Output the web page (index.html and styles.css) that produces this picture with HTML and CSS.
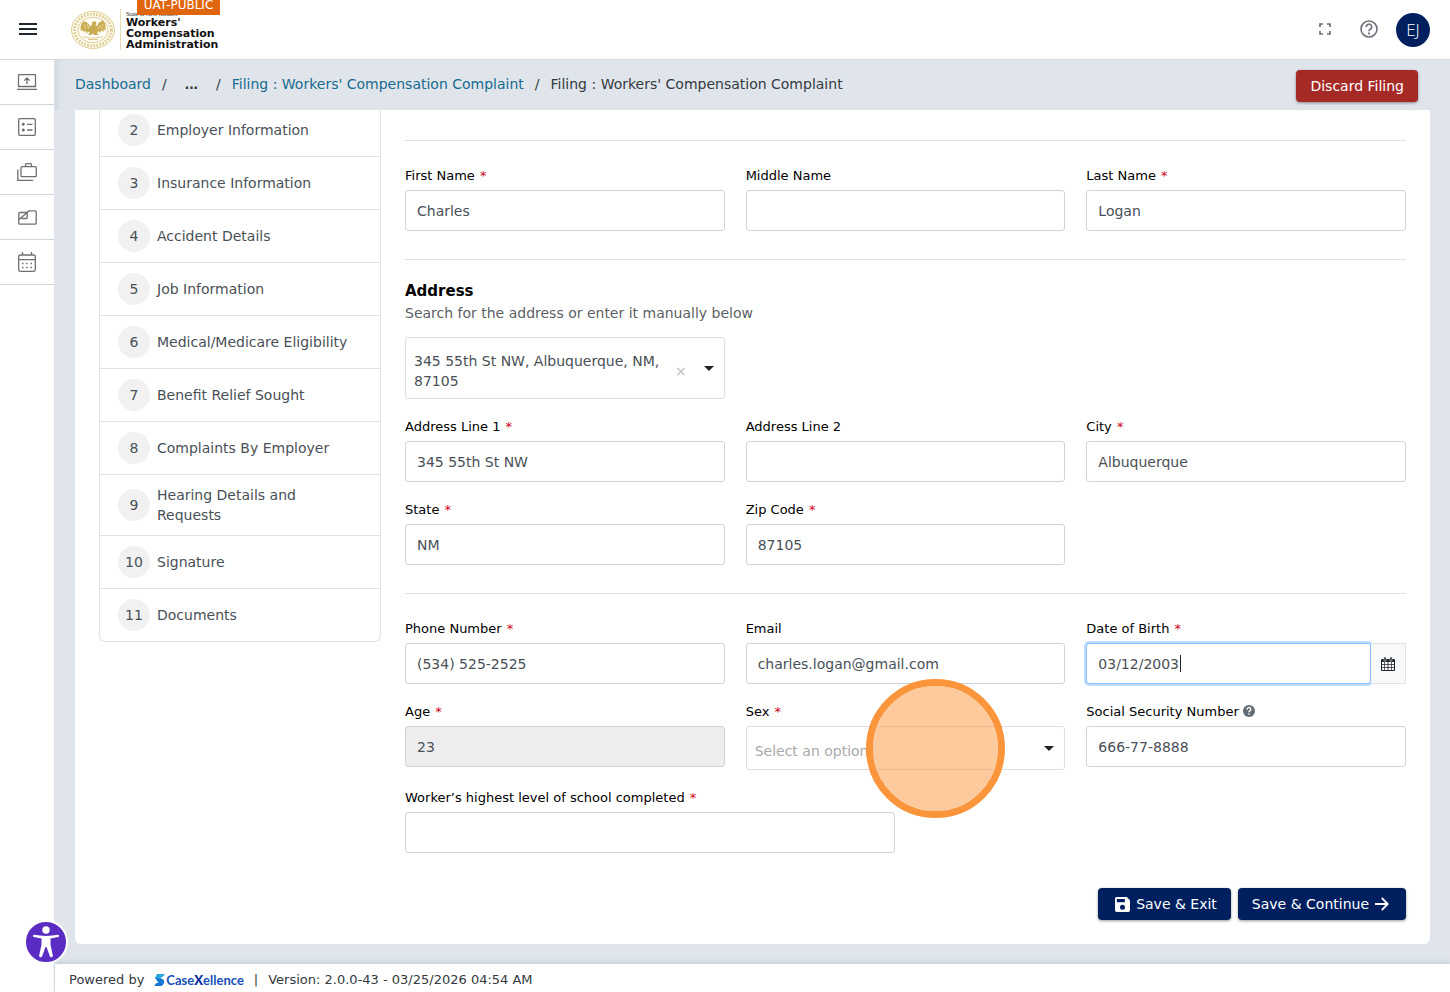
FILE: index.html
```html
<!DOCTYPE html>
<html lang="en">
<head>
  <meta charset="UTF-8">
  <meta name="viewport" content="width=device-width, initial-scale=1.0">
  <title>Filing : Workers' Compensation Complaint</title>
  <link rel="stylesheet" href="styles.css">
</head>
<body>
  <header class="topbar">
    <button class="icon-btn menu-btn" type="button" aria-label="Menu">
      <svg width="20" height="14" viewBox="0 0 20 14" fill="none" stroke="#20262e" stroke-width="2"><path d="M1 2h18M1 7h18M1 12h18"/></svg>
    </button>
    <a class="brand" href="#">
      <svg class="seal" width="46" height="40" viewBox="0 0 46 40" fill="none">
        <ellipse cx="23" cy="20" rx="21.5" ry="18.500" fill="#fdfaf0" stroke="#e0cf92"/>
        <ellipse cx="23" cy="20" rx="18.500" ry="15.800" stroke="#dccb8c" stroke-width="3" stroke-dasharray="1.600 1.500"/>
        <ellipse cx="23" cy="20" rx="15" ry="12.700" fill="#fffdf7" stroke="#e0cf92"/>
        <path d="M22 13c1-2.500 4-2 4.500 0l-1 2 1.500 1c1-3 3-5 6-5 2 1 3 4 2.500 10l-1.500-2-.8 3-1.700-2-1 3-2-2-1.500 2 2 2h-5l-1-1.500-2 1.500h-3l2-2.500-2-1-1.500 2-1.200-3-1.800 2-.5-3-2 2c-1-5 0-9 3-10 3 0 5 2 6 5l1.500-1z" fill="#c9ab52"/>
        <path d="M14 14l2 5M17 13.500l2 5.500M33 14l-2 5M30 15l-2 4" stroke="#efe0ab" stroke-width=".8"/>
        <path d="M13 26.500c6 2 14 2 20 0M18 29.500h10" stroke="#dcc98a"/>
      </svg>
      <span class="brand-text">
        <span class="brand-state">State of New Mexico</span>
        <span class="brand-name">Workers'<br>Compensation<br>Administration</span>
      </span>
      <span class="env-tag">UAT-PUBLIC</span>
    </a>
    <div class="topbar-actions">
      <button class="icon-btn" type="button" aria-label="Full screen">
        <svg width="12" height="12" viewBox="0 0 12 12" fill="none" stroke="#6b7079" stroke-width="1.700"><path d="M1 4V1h3M8 1h3v3M11 8v3H8M4 11H1V8"/></svg>
      </button>
      <button class="icon-btn" type="button" aria-label="Help">
        <svg width="18" height="18" viewBox="0 0 18 18" fill="none" stroke="#6b7079" stroke-width="1.600"><circle cx="9" cy="9" r="8"/><path d="M6.300 7.100A2.700 2.700 0 1 1 9.900 9.400C9.200 9.800 9 10.200 9 11.200"/><path d="M9 12.600v1.800" stroke-width="1.800"/></svg>
      </button>
      <button class="avatar" type="button">EJ</button>
    </div>
  </header>

  <div class="shell">
    <nav class="rail" aria-label="Main">
      <a href="#" aria-label="Submit"><svg width="20" height="16" viewBox="0 0 20 16"><path d="M1.500 12.500v-11a1 1 0 0 1 1-1h15a1 1 0 0 1 1 1v11zM0 15.300h20M10 10V4M7.300 6.600 10 4l2.700 2.600"/></svg></a>
      <a href="#" aria-label="Tasks"><svg width="18" height="18" viewBox="0 0 18 18"><rect x=".7" y=".7" width="16.600" height="16.600" rx="1"/><path d="M9 6.300h5.500M9 12h5.500"/><path d="M3.800 6.300h3M5.300 4.800v3M3.800 12h3M5.300 10.500v3" stroke-width="1.600"/></svg></a>
      <a href="#" aria-label="Cases"><svg width="20" height="18" viewBox="0 0 20 18"><rect x="4" y="3.700" width="15.300" height="10" rx="1"/><path d="M8.500 3.500V1.700a1 1 0 0 1 1-1h4a1 1 0 0 1 1 1v1.800M.8 6.500v10.800H16"/></svg></a>
      <a href="#" aria-label="Documents"><svg width="19" height="15" viewBox="0 0 19 15"><path d="M9.200 2.500 10.500.8h6.700a1 1 0 0 1 1 1v11.400a1 1 0 0 1-1 1H1.800a1 1 0 0 1-1-1V3.500a1 1 0 0 1 1-1h7.400v5a1 1 0 0 1-1 1H3.500M1 9.500l8.200-7"/></svg></a>
      <a href="#" aria-label="Calendar"><svg width="18" height="20" viewBox="0 0 18 20"><rect x=".7" y="3" width="16.600" height="16.300" rx="1.500"/><path d="M.7 7.700h16.600M4.500 0v3M13.500 0v3"/><path d="M4 11.500h1.500M8.200 11.500h1.500M12.500 11.500H14M4 15.500h1.500M8.200 15.500h1.500M12.500 15.500H14" stroke-width="1.500"/></svg></a>
    </nav>

    <div class="page">
      <div class="crumb-bar">
        <nav class="breadcrumb" aria-label="Breadcrumb">
          <a href="#">Dashboard</a><span class="sep">/</span><button type="button" class="more">...</button><span class="sep">/</span><a href="#">Filing : Workers' Compensation Complaint</a><span class="sep">/</span><span>Filing : Workers' Compensation Complaint</span>
        </nav>
        <button class="btn btn-danger" type="button">Discard Filing</button>
      </div>

      <main class="card">
        <ol class="steps">
          <li><a href="#"><span class="num">2</span>Employer Information</a></li>
          <li><a href="#"><span class="num">3</span>Insurance Information</a></li>
          <li><a href="#"><span class="num">4</span>Accident Details</a></li>
          <li><a href="#"><span class="num">5</span>Job Information</a></li>
          <li><a href="#"><span class="num">6</span>Medical/Medicare Eligibility</a></li>
          <li><a href="#"><span class="num">7</span>Benefit Relief Sought</a></li>
          <li><a href="#"><span class="num">8</span>Complaints By Employer</a></li>
          <li><a href="#"><span class="num">9</span>Hearing Details and Requests</a></li>
          <li><a href="#"><span class="num">10</span>Signature</a></li>
          <li><a href="#"><span class="num">11</span>Documents</a></li>
        </ol>

        <form class="form">
          <hr>
          <div class="grid">
            <div class="field">
              <label for="first">First Name <span class="req">*</span></label>
              <input type="text" id="first" value="Charles">
            </div>
            <div class="field">
              <label for="middle">Middle Name</label>
              <input type="text" id="middle">
            </div>
            <div class="field">
              <label for="last">Last Name <span class="req">*</span></label>
              <input type="text" id="last" value="Logan">
            </div>
          </div>
          <hr>
          <h2>Address</h2>
          <p class="hint" id="address-hint">Search for the address or enter it manually below</p>
          <div class="grid">
            <div class="field picker">
              <select class="address-select" aria-labelledby="address-hint">
                <option>345 55th St NW, Albuquerque, NM, 87105</option>
              </select>
              <button class="clear" type="button" aria-label="Clear address">×</button>
            </div>
            <div class="field row-start">
              <label for="line1">Address Line 1 <span class="req">*</span></label>
              <input type="text" id="line1" value="345 55th St NW">
            </div>
            <div class="field">
              <label for="line2">Address Line 2</label>
              <input type="text" id="line2">
            </div>
            <div class="field">
              <label for="city">City <span class="req">*</span></label>
              <input type="text" id="city" value="Albuquerque">
            </div>
            <div class="field">
              <label for="state">State <span class="req">*</span></label>
              <input type="text" id="state" value="NM">
            </div>
            <div class="field">
              <label for="zip">Zip Code <span class="req">*</span></label>
              <input type="text" id="zip" value="87105">
            </div>
          </div>
          <hr>
          <div class="grid">
            <div class="field">
              <label for="phone">Phone Number <span class="req">*</span></label>
              <input type="text" id="phone" value="(534) 525-2525">
            </div>
            <div class="field">
              <label for="email">Email</label>
              <input type="email" id="email" value="charles.logan@gmail.com">
            </div>
            <div class="field">
              <label for="dob">Date of Birth <span class="req">*</span></label>
              <div class="input-group">
                <input type="text" id="dob" value="03/12/2003">
                <span class="caret"></span>
                <button type="button" class="addon" aria-label="Pick a date">
                  <svg width="14" height="14" viewBox="0 0 14 14"><path d="M1 2h12a1 1 0 0 1 1 1v10a1 1 0 0 1-1 1H1a1 1 0 0 1-1-1V3a1 1 0 0 1 1-1z" fill="#212529"/><path d="M3 0h2v4H3zM9 0h2v4H9z" fill="#212529" stroke="#f8f9fa" stroke-width=".5"/><path d="M1 5h2.300v2H1zM4 5h2.600v2H4zM7.400 5H10v2H7.400zM10.700 5H13v2h-2.300zM1 7.800h2.300v2.200H1zM4 7.800h2.600v2.200H4zM7.400 7.800H10v2.200H7.400zM10.700 7.800H13v2.200h-2.300zM1 10.800h2.300V13H1zM4 10.800h2.600V13H4zM7.400 10.800H10V13H7.400zM10.700 10.800H13V13h-2.300z" fill="#f8f9fa"/></svg>
                </button>
              </div>
            </div>
            <div class="field">
              <label for="age">Age <span class="req">*</span></label>
              <input type="text" id="age" value="23" disabled>
            </div>
            <div class="field">
              <label for="sex">Sex <span class="req">*</span></label>
              <select id="sex" class="placeholder">
                <option>Select an option</option>
              </select>
              <span class="pulse"></span>
            </div>
            <div class="field">
              <label for="ssn">Social Security Number
                <svg class="tip" width="12" height="12" viewBox="0 0 12 12"><circle cx="6" cy="6" r="6" fill="#636b74"/><path d="M4.200 4.700A1.800 1.800 0 1 1 6.700 6C6.100 6.300 6 6.500 6 7.200M6 8.200v1.500" fill="none" stroke="#fff" stroke-width="1.400"/></svg>
              </label>
              <input type="text" id="ssn" value="666-77-8888">
            </div>
          </div>
          <div class="grid grid-half">
            <div class="field">
              <label for="school">Worker’s highest level of school completed <span class="req">*</span></label>
              <input type="text" id="school">
            </div>
          </div>
          <div class="form-actions">
            <button class="btn btn-primary icon-left" type="button">
              <svg width="15" height="15" viewBox="0 0 16 16"><path fill="#fff" fill-rule="evenodd" d="M1.800 0h10.700L16 3.500v10.700a1.800 1.800 0 0 1-1.800 1.800H1.800A1.800 1.800 0 0 1 0 14.200V1.800A1.800 1.800 0 0 1 1.800 0zM2 2v3.500h8.500V2zM8 8.300a2.700 2.700 0 1 0 0 5.400 2.700 2.700 0 0 0 0-5.400z"/></svg>
              Save &amp; Exit
            </button>
            <button class="btn btn-primary icon-right" type="button">
              Save &amp; Continue
              <svg width="14" height="14" viewBox="0 0 14 14" fill="none" stroke="#fff" stroke-width="1.800"><path d="M0 7h12.500M6.800 1l6 6-6 6"/></svg>
            </button>
          </div>
        </form>
      </main>

      <footer class="footer">
        <span>Powered by</span>
        <a class="vendor" href="#">
          <svg width="12" height="14" viewBox="0 0 12 14"><path d="M3 1h8L8.500 4H6.500L10 8 5 7 1 5z" fill="#29a8e0"/><path d="M1 4.500l8.500 2.300c1.500 2 .5 4.700-2 6.200H0l2.500-3h2z" fill="#1976d2"/></svg>
          <span>Case<b>X</b>ellence</span>
        </a>
        <span class="bar">|</span>
        <span>Version: 2.0.0-43 - 03/25/2026 04:54 AM</span>
      </footer>
    </div>
  </div>

  <button class="a11y" type="button" aria-label="Accessibility options">
    <svg width="26" height="32" viewBox="0 0 26 32" fill="#fff"><circle cx="13" cy="4" r="3.700"/><path d="M1 8.800c8 1.500 16 1.500 24 0 1.300 0 1.400 1.800.2 2.100L17.500 12.500v6l2.300 11c.3 2-2.300 2.500-2.900.7L13.500 21h-1L9.100 30.200c-.6 1.800-3.200 1.300-2.900-.7l2.300-11v-6L.8 10.900C-.4 10.600-.3 8.800 1 8.800z"/></svg>
  </button>

  <script>
    const dob = document.getElementById("dob");
    dob.focus();
    dob.setSelectionRange(dob.value.length, dob.value.length);
  </script>
</body>
</html>
```
FILE: styles.css
```css
* {
  box-sizing: border-box;
}
body {
  margin: 0;
  min-height: 100vh;
  display: flex;
  flex-direction: column;
  font-family: 'DejaVu Sans', Verdana, sans-serif;
  font-size: 14px;
  line-height: 20px;
  color: #495057;
  background-color: #fff;
}
a {
  color: #176b8f;
  text-decoration: none;
}
button, input, select {
  font: inherit;
  color: inherit;
}
button {
  cursor: pointer;
}
.topbar {
  height: 60px;
  display: flex;
  align-items: center;
  border-bottom: 1px solid #d5dade;
}
.icon-btn {
  display: flex;
  padding: 0 0 1px;
  border: none;
  background: none;
}
.menu-btn {
  width: 55px;
  justify-content: center;
}
.brand {
  position: relative;
  display: flex;
  align-items: center;
  gap: 4px;
  margin-left: 15px;
  color: #111;
}
.brand-text {
  display: flex;
  flex-direction: column;
  padding: 2px 0 0 5px;
  border-left: 1px solid #e6dcb4;
}
.brand-state {
  font: 6px/6px 'Liberation Serif', serif;
}
.brand-name {
  font-size: 11px;
  line-height: 11px;
  font-weight: 700;
}
.env-tag {
  position: absolute;
  right: -2px;
  top: -14px;
  padding: 2px 7px;
  font-size: 12px;
  line-height: 16px;
  color: #fff;
  background-color: #df650e;
}
.topbar-actions {
  display: flex;
  align-items: center;
  gap: 29px;
  margin-left: auto;
  padding-right: 20px;
}
.avatar {
  width: 34px;
  height: 34px;
  margin-left: -11px;
  padding: 0;
  border: none;
  border-radius: 50%;
  font-family: 'Open Sans', sans-serif;
  font-size: 17px;
  font-weight: 300;
  color: #fff;
  background-color: #001f5f;
}
.shell {
  flex: 1;
  display: flex;
}
.rail {
  width: 55px;
  flex-shrink: 0;
  border-right: 1px solid #dde2e8;
}
.rail a {
  display: flex;
  align-items: center;
  justify-content: center;
  height: 45px;
  border-bottom: 1px solid #d0d6da;
}
.rail svg {
  fill: none;
  stroke: #6f6f6f;
  stroke-width: 1.3;
}
.page {
  flex: 1;
  min-width: 0;
  display: flex;
  flex-direction: column;
  background-color: #e0e5ec;
}
.crumb-bar {
  display: flex;
  justify-content: space-between;
  align-items: flex-start;
  height: 50px;
  padding: 10px 32px 0 20px;
  box-shadow: inset 5px 0 5px -3px #cdd5dd;
}
.breadcrumb {
  display: flex;
  align-items: center;
  padding-top: 4px;
  color: #343a40;
}
.sep {
  margin: 0 11px;
}
.more {
  padding: 0 7px;
  border: none;
  background: none;
  font-family: 'Liberation Sans', sans-serif;
  font-size: 16px;
  font-weight: 700;
}
.btn {
  display: flex;
  align-items: center;
  gap: 6px;
  height: 32px;
  padding: 0 14px;
  border: none;
  border-radius: 4px;
  color: #fff;
  box-shadow: 0 1px 3px rgba(0, 0, 0, 0.4);
}
.btn-danger {
  background-color: #a52a25;
}
.btn-primary {
  background-color: #001f5f;
}
.icon-left {
  padding-left: 17px;
}
.icon-right {
  padding-right: 17px;
}
.card {
  flex: 1;
  display: flex;
  align-items: flex-start;
  gap: 24px;
  margin: 0 20px 20px;
  padding: 0 24px 24px;
  border-radius: 0 0 6px 6px;
  background-color: #fff;
}
.steps {
  width: 282px;
  flex-shrink: 0;
  margin: 0;
  padding: 0;
  list-style: none;
  border: 1px solid #dee2e6;
  border-top: none;
  border-radius: 0 0 6px 6px;
}
.steps li + li {
  border-top: 1px solid #dee2e6;
}
.steps a {
  display: flex;
  align-items: center;
  gap: 7px;
  padding: 10px 24px 10px 18px;
  color: #495057;
}
.steps li:first-child a {
  padding-top: 4px;
}
.num {
  width: 32px;
  height: 32px;
  flex-shrink: 0;
  border-radius: 50%;
  line-height: 32px;
  text-align: center;
  background-color: #f1f1f1;
}
.form {
  flex: 1;
  min-width: 0;
  padding-top: 2px;
}
.form hr {
  margin: 28px 0 26px;
  border: none;
  border-top: 1px solid #dee2e6;
}
.form h2 {
  margin: -5px 0 2px;
  font-size: 15px;
  line-height: 20px;
  color: #000;
}
.hint {
  margin: 0 0 14px;
  color: #5b5f63;
}
.grid {
  display: grid;
  grid-template-columns: repeat(3, minmax(0, 1fr));
  gap: 19px 21px;
}
.grid-half {
  grid-template-columns: repeat(2, minmax(0, 1fr));
  margin-top: 19px;
}
.field {
  position: relative;
}
.row-start {
  grid-column-start: 1;
}
.field label {
  display: block;
  margin-bottom: 5px;
  font-size: 13px;
  line-height: 18px;
  color: #000;
}
.req {
  margin-left: 1px;
  color: #d0021b;
}
.tip {
  vertical-align: -1px;
}
.field input, .field select {
  display: block;
  width: 100%;
  height: 41px;
  padding: 0 11px;
  border: 1px solid #ced4da;
  border-radius: 3px;
  background-color: #fff;
}
.field input:disabled {
  background-color: #ededed;
}
.field select {
  appearance: none;
  height: 44px;
  padding: 6px 40px 0 8px;
  border-color: #dcdfe2;
  background: url("data:image/svg+xml,%3Csvg xmlns='http://www.w3.org/2000/svg' width='10' height='5'%3E%3Cpath d='M0 0h10L5 5z' fill='%23222'/%3E%3C/svg%3E") no-repeat right 10px center;
}
.field .placeholder {
  color: #a9a9a9;
}
.field .address-select {
  height: 62px;
  padding: 13px 60px 7px 8px;
  white-space: normal;
  line-height: 20px;
}
.clear {
  position: absolute;
  right: 38px;
  bottom: 18px;
  padding: 0;
  border: none;
  background: none;
  color: #bbb;
}
.input-group {
  position: relative;
  display: flex;
}
.field .input-group input {
  flex: 1;
  min-width: 0;
  caret-color: transparent;
}
.field .input-group input:focus {
  border-color: #80bdff;
  outline: none;
  box-shadow: 0 0 0 2px #bfdeff;
}
.caret {
  display: none;
  position: absolute;
  left: 94px;
  top: 12px;
  width: 1px;
  height: 17px;
  background-color: #212529;
}
.input-group input:focus + .caret {
  display: block;
}
.addon {
  display: flex;
  align-items: center;
  justify-content: center;
  width: 35px;
  padding: 0;
  border: 1px solid #dee2e6;
  border-left: none;
  background-color: #f8f9fa;
}
.pulse {
  position: absolute;
  left: 120px;
  top: -24px;
  width: 139px;
  height: 139px;
  border: 7px solid #fb953b;
  border-radius: 50%;
  background-color: rgba(251, 149, 59, 0.5);
  background-clip: padding-box;
  pointer-events: none;
}
.form-actions {
  display: flex;
  justify-content: flex-end;
  gap: 7px;
  margin-top: 35px;
}
.footer {
  display: flex;
  align-items: center;
  height: 28px;
  padding: 4px 14px 0;
  font-size: 13px;
  color: #343a40;
  background-color: #fff;
  box-shadow: 0 -2px 5px rgba(120, 140, 160, 0.25);
}
.vendor {
  display: flex;
  align-items: center;
  margin-left: 10px;
  font-family: Lato, sans-serif;
  font-size: 13px;
  font-weight: 700;
  color: #1650b8;
}
.vendor b {
  font-weight: 900;
  color: #0b2fa0;
}
.bar {
  margin: 0 10px;
}
.a11y {
  position: fixed;
  left: 24px;
  bottom: 28px;
  width: 44px;
  height: 44px;
  display: flex;
  align-items: center;
  justify-content: center;
  padding: 0;
  border: 2px solid #fff;
  border-radius: 50%;
  background-color: #5b2cc4;
}
```
